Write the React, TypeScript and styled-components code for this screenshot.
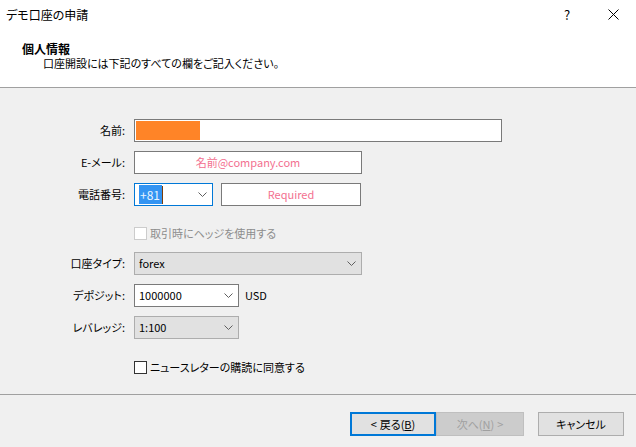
import React from 'react';
import styled, { createGlobalStyle } from 'styled-components';

const GlobalStyle = createGlobalStyle`
  html, body {
    margin: 0;
    padding: 0;
    background: #f0f0f0;
  }
  body {
    font-family: "Noto Sans CJK JP", "Noto Sans", sans-serif;
    font-size: 11px;
    font-feature-settings: "palt";
    color: #000000;
  }
`;

const Dialog = styled.div`
  width: 636px;
  height: 447px;
  display: flex;
  flex-direction: column;
  background: #f0f0f0;
  overflow: hidden;
`;

const TitleBar = styled.div`
  height: 30px;
  display: flex;
  align-items: center;
  padding: 0 0 2px 6px;
  box-sizing: border-box;
  background: #ffffff;
`;

const TitleText = styled.div`
  flex: 1;
  font-size: 12px;
  line-height: 15px;
`;

const TitleButton = styled.div`
  width: 46px;
  height: 28px;
  display: flex;
  align-items: center;
  justify-content: center;
  font-size: 13px;
`;

const Header = styled.div`
  background: #ffffff;
  border-bottom: 1px solid #a0a0a0;
  padding: 11px 0 0 22px;
  height: 46px;
`;

const HeaderTitle = styled.div`
  font-size: 12px;
  font-weight: 700;
  line-height: 15px;
`;

const HeaderSub = styled.div`
  padding-left: 21px;
  line-height: 15px;
`;

const Body = styled.div`
  flex: 1;
  padding-top: 31px;
  display: flex;
  flex-direction: column;
`;

const Row = styled.div<{ $gap?: number }>`
  display: flex;
  align-items: center;
  height: 23px;
  margin-top: ${p => p.$gap ?? 0}px;
`;

const Label = styled.div`
  width: 125px;
  text-align: right;
  margin-right: 9px;
  line-height: 15px;
`;

const Spacer = styled.div`
  width: 134px;
`;

const TextBox = styled.div<{ $w: number; $center?: boolean }>`
  width: ${p => p.$w}px;
  height: 23px;
  box-sizing: border-box;
  border: 1px solid #7a7a7a;
  background: #ffffff;
  display: flex;
  align-items: center;
  justify-content: ${p => (p.$center ? 'center' : 'flex-start')};
  padding: 0 1px;
`;

const Hint = styled.span`
  color: #f3708f;
  line-height: 15px;
`;

const Redacted = styled.div`
  width: 64px;
  height: 19px;
  background: #ff8427;
`;

const Combo = styled.div<{ $w: number; $variant?: 'focus' | 'list' | 'edit' }>`
  width: ${p => p.$w}px;
  height: 23px;
  box-sizing: border-box;
  display: flex;
  align-items: center;
  padding: 0 5px 0 4px;
  border: 1px solid
    ${p => (p.$variant === 'focus' ? '#0078d7' : p.$variant === 'list' ? '#adadad' : '#7a7a7a')};
  background: ${p => (p.$variant === 'list' ? '#e1e1e1' : '#ffffff')};
  margin-right: ${p => (p.$variant === 'focus' ? 8 : 0)}px;
`;

const ComboValue = styled.div`
  flex: 1;
  line-height: 15px;
  display: flex;
  align-items: center;
`;

const Selected = styled.span`
  background: #3394f2;
  color: #eaf4ff;
  padding: 2px 2px 2px 1px;
  font-size: 12px;
  line-height: 15px;
`;

const Caret = styled.span`
  width: 1px;
  height: 18px;
  background: #7a3d0a;
`;

const Unit = styled.span`
  margin-left: 6px;
  line-height: 15px;
`;

const CheckRow = styled.label<{ $disabled?: boolean }>`
  display: flex;
  align-items: center;
  gap: 3px;
  color: ${p => (p.$disabled ? '#8d8d8d' : '#000000')};
  line-height: 15px;
`;

const Box13 = styled.span<{ $disabled?: boolean }>`
  width: 13px;
  height: 13px;
  box-sizing: border-box;
  border: 1px solid ${p => (p.$disabled ? '#cccccc' : '#333333')};
  background: #ffffff;
`;

const Footer = styled.div`
  border-top: 1px solid #a0a0a0;
  display: flex;
  justify-content: flex-end;
  align-items: flex-start;
  padding: 17px 12px 0 0;
  height: 35px;
`;

const Button = styled.div<{ $w: number; $kind?: 'default' | 'disabled' | 'normal'; $ml?: number }>`
  width: ${p => p.$w}px;
  height: 24px;
  box-sizing: border-box;
  display: flex;
  align-items: center;
  justify-content: center;
  gap: 3px;
  margin-left: ${p => p.$ml ?? 0}px;
  line-height: 15px;
  background: ${p => (p.$kind === 'disabled' ? '#cccccc' : '#e1e1e1')};
  color: ${p => (p.$kind === 'disabled' ? '#a0a0a0' : '#000000')};
  border: ${p =>
    p.$kind === 'default' ? '2px solid #0078d7' : p.$kind === 'disabled' ? '1px solid #bfbfbf' : '1px solid #adadad'};
`;

const U = styled.span`
  text-decoration: underline;
`;

const Chevron = () => (
  <svg width="9" height="5" viewBox="0 0 9 5">
    <polyline points="0.5,0.5 4.5,4.5 8.5,0.5" fill="none" stroke="#5f5f5f" strokeWidth="1" />
  </svg>
);

const App: React.FC = () => {
  return (
    <Dialog>
      <GlobalStyle />
      <TitleBar>
        <TitleText>デモ口座の申請</TitleText>
        <TitleButton>?</TitleButton>
        <TitleButton>
          <svg width="11" height="11" viewBox="0 0 11 11">
            <path d="M0.5 0.5 L10.5 10.5 M10.5 0.5 L0.5 10.5" stroke="#000" strokeWidth="1" />
          </svg>
        </TitleButton>
      </TitleBar>

      <Header>
        <HeaderTitle>個人情報</HeaderTitle>
        <HeaderSub>口座開設には下記のすべての欄をご記入ください。</HeaderSub>
      </Header>

      <Body>
        <Row>
          <Label>名前:</Label>
          <TextBox $w={368}>
            <Redacted />
          </TextBox>
        </Row>
        <Row $gap={9}>
          <Label>E-メール:</Label>
          <TextBox $w={228} $center>
            <Hint>名前@company.com</Hint>
          </TextBox>
        </Row>
        <Row $gap={9}>
          <Label>電話番号:</Label>
          <Combo $w={79} $variant="focus">
            <ComboValue>
              <Selected>+81</Selected>
              <Caret />
            </ComboValue>
            <Chevron />
          </Combo>
          <TextBox $w={140} $center>
            <Hint>Required</Hint>
          </TextBox>
        </Row>
        <Row $gap={16}>
          <Spacer />
          <CheckRow $disabled>
            <Box13 $disabled />
            取引時にヘッジを使用する
          </CheckRow>
        </Row>
        <Row $gap={7}>
          <Label>口座タイプ:</Label>
          <Combo $w={228} $variant="list">
            <ComboValue>forex</ComboValue>
            <Chevron />
          </Combo>
        </Row>
        <Row $gap={9}>
          <Label>デポジット:</Label>
          <Combo $w={105} $variant="edit">
            <ComboValue>1000000</ComboValue>
            <Chevron />
          </Combo>
          <Unit>USD</Unit>
        </Row>
        <Row $gap={9}>
          <Label>レバレッジ:</Label>
          <Combo $w={105} $variant="list">
            <ComboValue>1:100</ComboValue>
            <Chevron />
          </Combo>
        </Row>
        <Row $gap={17}>
          <Spacer />
          <CheckRow>
            <Box13 />
            ニュースレターの購読に同意する
          </CheckRow>
        </Row>
      </Body>

      <Footer>
        <Button $w={86} $kind="default">
          <span>&lt;</span>
          <span>
            戻る(<U>B</U>)
          </span>
        </Button>
        <Button $w={88} $kind="disabled">
          <span>
            次へ(<U>N</U>)
          </span>
          <span>&gt;</span>
        </Button>
        <Button $w={86} $kind="normal" $ml={14}>
          キャンセル
        </Button>
      </Footer>
    </Dialog>
  );
};

export default App;
